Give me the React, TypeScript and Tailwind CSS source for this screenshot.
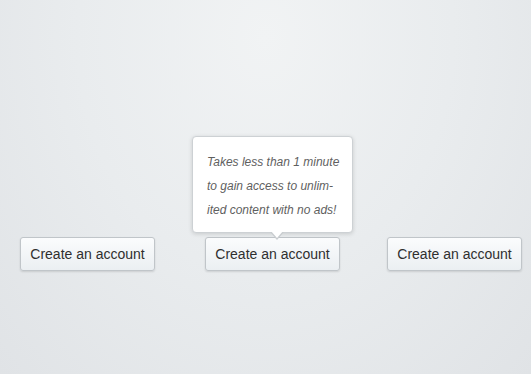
const Button = ({ children }: { children: React.ReactNode }) => (
  <button className="w-[135px] h-[34px] shrink-0 rounded-[3px] border border-[#c0c5c9] bg-gradient-to-b from-[#fbfcfd] to-[#ebeff2] text-[14px] text-[#2f2f2f] shadow-[0_1px_2px_rgba(0,0,0,0.12)] font-['Liberation_Sans',Arial,sans-serif]">
    {children}
  </button>
)

const App = () => {
  return (
    <div className="w-[531px] h-[374px] overflow-hidden bg-[radial-gradient(ellipse_at_50%_10%,#f1f3f4_0%,#e9ecee_50%,#e0e3e6_100%)] font-['Liberation_Sans',Arial,sans-serif]">
      <div className="flex flex-row items-start pt-[237px] pl-[20px] gap-[50px]">
        <Button>Create an account</Button>
        <div className="relative">
          {/* tooltip */}
          <div className="absolute bottom-[38px] left-[-13px] w-[161px] rounded-[4px] border border-[#cdd1d4] bg-white pl-[14px] pt-[13px] pb-[10px] shadow-[0_1px_4px_rgba(0,0,0,0.15)]">
            <p className="text-[12px] italic leading-[24px] text-[#5f5f5f] whitespace-nowrap">
              Takes less than 1 minute
              <br />
              to gain access to unlim-
              <br />
              ited content with no ads!
            </p>
            <div className="absolute left-[77px] bottom-[-8px] w-0 h-0 border-l-[7px] border-r-[7px] border-t-[8px] border-l-transparent border-r-transparent border-t-[#c9cdd0]" />
            <div className="absolute left-[78px] bottom-[-6px] w-0 h-0 border-l-[6px] border-r-[6px] border-t-[7px] border-l-transparent border-r-transparent border-t-white" />
          </div>
          <Button>Create an account</Button>
        </div>
        <div className="-ml-[3px]">
          <Button>Create an account</Button>
        </div>
      </div>
    </div>
  )
}

export default App
